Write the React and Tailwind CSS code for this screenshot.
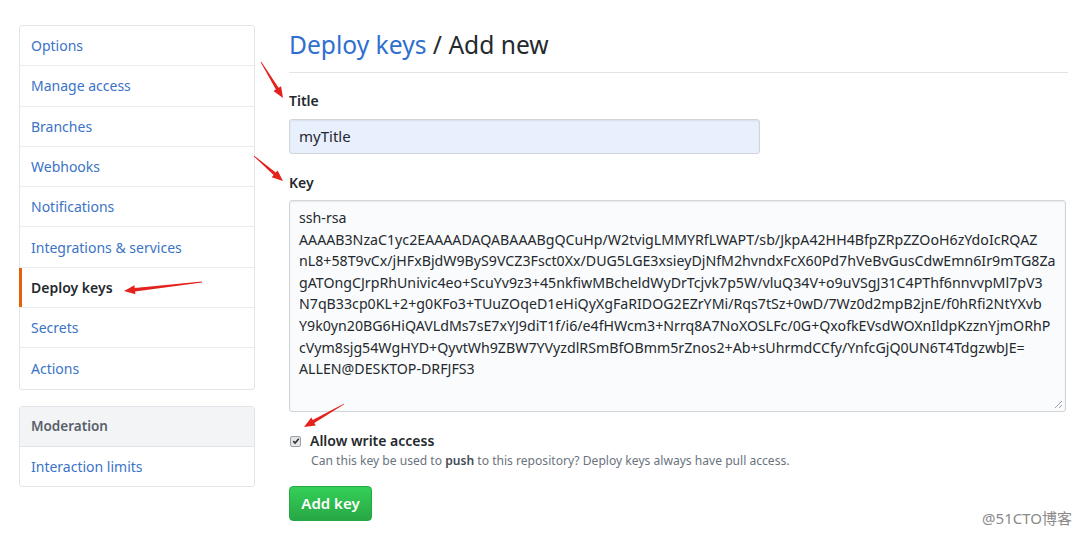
import React from 'react'

const font = { fontFamily: '"Noto Sans", "Open Sans", Arial, sans-serif' }

const menu = [
  'Options',
  'Manage access',
  'Branches',
  'Webhooks',
  'Notifications',
  'Integrations & services',
  'Deploy keys',
  'Secrets',
  'Actions',
]

const keyLines = [
  'ssh-rsa',
  'AAAAB3NzaC1yc2EAAAADAQABAAABgQCuHp/W2tvigLMMYRfLWAPT/sb/JkpA42HH4BfpZRpZZOoH6zYdoIcRQAZ',
  'nL8+58T9vCx/jHFxBjdW9ByS9VCZ3Fsct0Xx/DUG5LGE3xsieyDjNfM2hvndxFcX60Pd7hVeBvGusCdwEmn6Ir9mTG8Za',
  'gATOngCJrpRhUnivic4eo+ScuYv9z3+45nkfiwMBcheldWyDrTcjvk7p5W/vluQ34V+o9uVSgJ31C4PThf6nnvvpMl7pV3',
  'N7qB33cp0KL+2+g0KFo3+TUuZOqeD1eHiQyXgFaRIDOG2EZrYMi/Rqs7tSz+0wD/7Wz0d2mpB2jnE/f0hRfi2NtYXvb',
  'Y9k0yn20BG6HiQAVLdMs7sE7xYJ9diT1f/i6/e4fHWcm3+Nrrq8A7NoXOSLFc/0G+QxofkEVsdWOXnIldpKzznYjmORhP',
  'cVym8sjg54WgHYD+QyvtWh9ZBW7YVyzdlRSmBfOBmm5rZnos2+Ab+sUhrmdCCfy/YnfcGjQ0UN6T4TdgzwbJE=',
  'ALLEN@DESKTOP-DRFJFS3',
]

// tapered red annotation arrow, as drawn on the screenshot
const arrowPath = (x1, y1, x2, y2, w = 1.6) => {
  const dx = x2 - x1
  const dy = y2 - y1
  const len = Math.hypot(dx, dy)
  const ux = dx / len
  const uy = dy / len
  const nx = -uy
  const ny = ux
  const head = 11
  const bx = x2 - ux * head
  const by = y2 - uy * head
  const p = (x, y) => `${x.toFixed(1)},${y.toFixed(1)}`
  return [
    'M', p(x1 + nx * 0.4, y1 + ny * 0.4),
    'L', p(bx + nx * w, by + ny * w),
    'L', p(bx + nx * 4.5, by + ny * 4.5),
    'L', p(x2, y2),
    'L', p(bx - nx * 4.5, by - ny * 4.5),
    'L', p(bx - nx * w, by - ny * w),
    'L', p(x1 - nx * 0.4, y1 - ny * 0.4),
    'Z',
  ].join(' ')
}

const Arrows = () => (
  <svg className="absolute inset-0 pointer-events-none" width="1080" height="535">
    <path d={arrowPath(261, 62, 283, 98)} fill="#e3211d" />
    <path d={arrowPath(254, 156, 283, 181)} fill="#e3211d" />
    <path d={arrowPath(202, 282, 124, 291, 1.9)} fill="#e3211d" />
    <path d={arrowPath(344, 404, 304, 427)} fill="#e3211d" />
  </svg>
)

export default function App() {
  return (
    <div className="relative w-[1080px] h-[535px] bg-white overflow-hidden text-[#24292e]" style={font}>
      <div className="flex pt-[25px] pl-[19px]">
        {/* Sidebar */}
        <div className="w-[236px] shrink-0">
          <div className="border border-[#e1e4e8] rounded-[3px]">
            {menu.map((item, i) => {
              const active = item === 'Deploy keys'
              return (
                <div
                  key={item}
                  className={`relative h-[40.3px] flex items-center px-[11px] text-[14px] ${
                    i < menu.length - 1 ? 'border-b border-[#eaecef]' : ''
                  } ${active ? 'font-semibold text-[#24292e]' : 'text-[#3b73c6]'}`}
                >
                  {active && <span className="absolute left-[-1px] top-0 bottom-0 w-[3px] bg-[#e36209]" />}
                  {item}
                </div>
              )
            })}
          </div>
          <div className="mt-[16px] border border-[#e1e4e8] rounded-[3px]">
            <div className="h-[40px] flex items-center px-[11px] bg-[#f3f4f6] border-b border-[#e1e4e8] text-[13.5px] font-semibold text-[#586069]">
              Moderation
            </div>
            <div className="h-[39px] flex items-center px-[11px] text-[14px] text-[#3b73c6]">
              Interaction limits
            </div>
          </div>
        </div>

        {/* Main */}
        <div className="ml-[34px] w-[779px] pt-[2px]">
          <div className="border-b border-[#e1e4e8] pb-[9px]">
            <h1 className="text-[24.6px] leading-[36px] font-normal">
              <span className="text-[#2f6fd0]">Deploy keys</span> / Add new
            </h1>
          </div>

          <div className="mt-[18px] text-[14px] leading-[20px] font-semibold">Title</div>
          <div className="mt-[8px] w-[471px] h-[35px] rounded-[3px] border border-[#d1d5da] bg-[#e8f0fe] flex items-center px-[9px] text-[15px] shadow-[inset_0_1px_2px_rgba(27,31,35,0.075)]">
            myTitle
          </div>

          <div className="mt-[19px] text-[14px] leading-[20px] font-semibold">Key</div>
          <div className="relative mt-[7px] w-[777px] h-[212px] rounded-[3px] border border-[#d1d5da] bg-[#fafbfc] pt-[6px] px-[9px] text-[14.2px] leading-[21.6px] whitespace-pre text-[#24292e] shadow-[inset_0_1px_2px_rgba(27,31,35,0.075)]">
            {keyLines.map((l) => (
              <div key={l}>{l}</div>
            ))}
            <svg className="absolute right-[2px] bottom-[2px]" width="9" height="9" viewBox="0 0 9 9">
              <path d="M8 1 L1 8 M8 5 L5 8" stroke="#9aa0a6" strokeWidth="1" />
            </svg>
          </div>

          <div className="mt-[19px] flex items-center">
            <div className="ml-[1px] w-[11px] h-[11px] rounded-[2px] border border-[#9aa0a6] bg-[#e4e6e8] flex items-center justify-center">
              <svg width="8" height="8" viewBox="0 0 8 8">
                <path d="M1.2 4.2 L3.1 6 L6.8 1.8" fill="none" stroke="#333" strokeWidth="1.6" />
              </svg>
            </div>
            <span className="ml-[9px] text-[14px] leading-[20px] font-semibold">Allow write access</span>
          </div>
          <div className="mt-[1px] ml-[22px] text-[12.1px] leading-[18px] text-[#6a737d]">
            Can this key be used to <span className="font-semibold text-[#444d56]">push</span> to this repository? Deploy keys always have pull access.
          </div>

          <button className="mt-[16px] w-[83px] h-[35px] rounded-[4px] border border-[#28a745] bg-gradient-to-b from-[#34d058] to-[#28a745] text-white text-[15px] font-semibold">
            Add key
          </button>
        </div>
      </div>

      <Arrows />

      <div
        className="absolute right-[8px] bottom-[6px] text-[15px] text-[#8a8a8a]"
        style={{ fontFamily: '"Noto Sans", "Noto Sans CJK SC", sans-serif' }}
      >
        @51CTO博客
      </div>
    </div>
  )
}
